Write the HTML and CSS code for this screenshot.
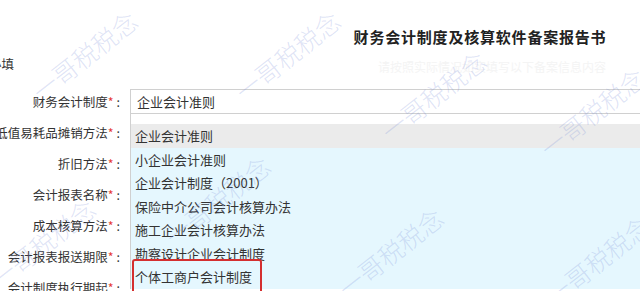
FILE: index.html
```html
<!DOCTYPE html>
<html lang="zh-CN">
<head>
  <meta charset="UTF-8">
  <meta name="viewport" content="width=device-width, initial-scale=1.0">
  <title>财务会计制度及核算软件备案报告书</title>
  <link rel="stylesheet" href="styles.css">
</head>
<body>
  <div class="page">
    <h1 class="title">财务会计制度及核算软件备案报告书</h1>

    <div class="note-row">
      <div class="note">带<span class="req">*</span>为必填</div>
      <div class="subtitle">请按照实际情况如实填写以下备案信息内容</div>
    </div>

    <form class="form">
      <div class="row">
        <label class="label">财务会计制度<span class="req">*</span>:</label>
        <div class="field">
          <div class="select">企业会计准则</div>
          <ul class="dropdown">
            <li class="option selected">企业会计准则</li>
            <li class="option">小企业会计准则</li>
            <li class="option">企业会计制度（2001）</li>
            <li class="option">保险中介公司会计核算办法</li>
            <li class="option">施工企业会计核算办法</li>
            <li class="option">勘察设计企业会计制度</li>
            <li class="option marked">个体工商户会计制度<span class="mark"></span></li>
          </ul>
        </div>
      </div>
      <div class="row">
        <label class="label">低值易耗品摊销方法<span class="req">*</span>:</label>
      </div>
      <div class="row">
        <label class="label">折旧方法<span class="req">*</span>:</label>
      </div>
      <div class="row">
        <label class="label">会计报表名称<span class="req">*</span>:</label>
      </div>
      <div class="row">
        <label class="label">成本核算方法<span class="req">*</span>:</label>
      </div>
      <div class="row">
        <label class="label">会计报表报送期限<span class="req">*</span>:</label>
      </div>
      <div class="row">
        <label class="label">会计制度执行期起<span class="req">*</span>:</label>
      </div>
    </form>

    <!-- 水印 -->
    <div class="wm" style="left:84px; top:55px;">一哥税税念</div>
    <div class="wm" style="left:287px; top:55px;">一哥税税念</div>
    <div class="wm" style="left:433px; top:95px;">一哥税税念</div>
    <div class="wm" style="left:592px; top:112px;">一哥税税念</div>
    <div class="wm" style="left:217px; top:200px;">一哥税税念</div>
    <div class="wm" style="left:42px; top:243px;">一哥税税念</div>
    <div class="wm" style="left:390px; top:252px;">一哥税税念</div>
    <div class="wm" style="left:597px; top:260px;">一哥税税念</div>
  </div>
</body>
</html>
```

FILE: styles.css
```css
body {
  margin: 0;
  font-family: "Noto Sans CJK SC", "Noto Sans", sans-serif;
  color: #333;
  background: #fff;
}

.page {
  position: relative;
  width: 640px;
  height: 291px;
  overflow: hidden;
}

.title {
  margin: 27px 0 0;
  padding-left: 320px;
  text-align: center;
  font-size: 15px;
  line-height: 20px;
  font-weight: bold;
  color: #222;
  letter-spacing: 0.8px;
}

.note-row {
  display: flex;
  height: 16px;
  margin-top: 9px;
}

.note {
  width: 14px;
  display: flex;
  justify-content: flex-end;
  white-space: nowrap;
  font-size: 12.5px;
  line-height: 16px;
}

.subtitle {
  margin-left: 364px;
  margin-top: 4px;
  font-size: 12px;
  line-height: 14px;
  color: #f4f4f4;
  white-space: nowrap;
}

.form {
  margin-top: 14px;
}

.row {
  display: flex;
  align-items: center;
  height: 31px;
}

.label {
  width: 120px;
  flex-shrink: 0;
  display: flex;
  justify-content: flex-end;
  white-space: nowrap;
  font-size: 12.5px;
  color: #333;
}

.req {
  color: #e53935;
  margin-right: 3px;
}

.field {
  position: relative;
  margin-left: 10px;
  flex: 1;
}

.select {
  width: 560px;
  height: 23px;
  line-height: 23px;
  padding-left: 6px;
  border: 1px solid #d0d0d0;
  font-size: 13px;
  color: #333;
}

.dropdown {
  position: absolute;
  left: 0;
  top: 100%;
  width: 560px;
  margin: 0;
  padding: 10px 0 0;
  list-style: none;
  background: #fff;
  border-left: 1px solid #d0d0d0;
  z-index: 5;
}

.option {
  position: relative;
  height: 23.5px;
  line-height: 23.5px;
  padding-left: 4px;
  font-size: 13px;
  color: #333;
  background: #e5f7fe;
  white-space: nowrap;
}

.option.selected {
  background: #ebebeb;
}

.mark {
  position: absolute;
  left: 1px;
  top: -6px;
  width: 126px;
  height: 40px;
  border: 2px solid #d42f2f;
  border-radius: 3px;
}

.wm {
  position: absolute;
  transform: translate(-50%, -50%) rotate(-38deg);
  font-size: 25px;
  line-height: 30px;
  font-weight: 300;
  color: rgba(120, 140, 215, 0.24);
  white-space: nowrap;
  pointer-events: none;
  z-index: 10;
}
```
